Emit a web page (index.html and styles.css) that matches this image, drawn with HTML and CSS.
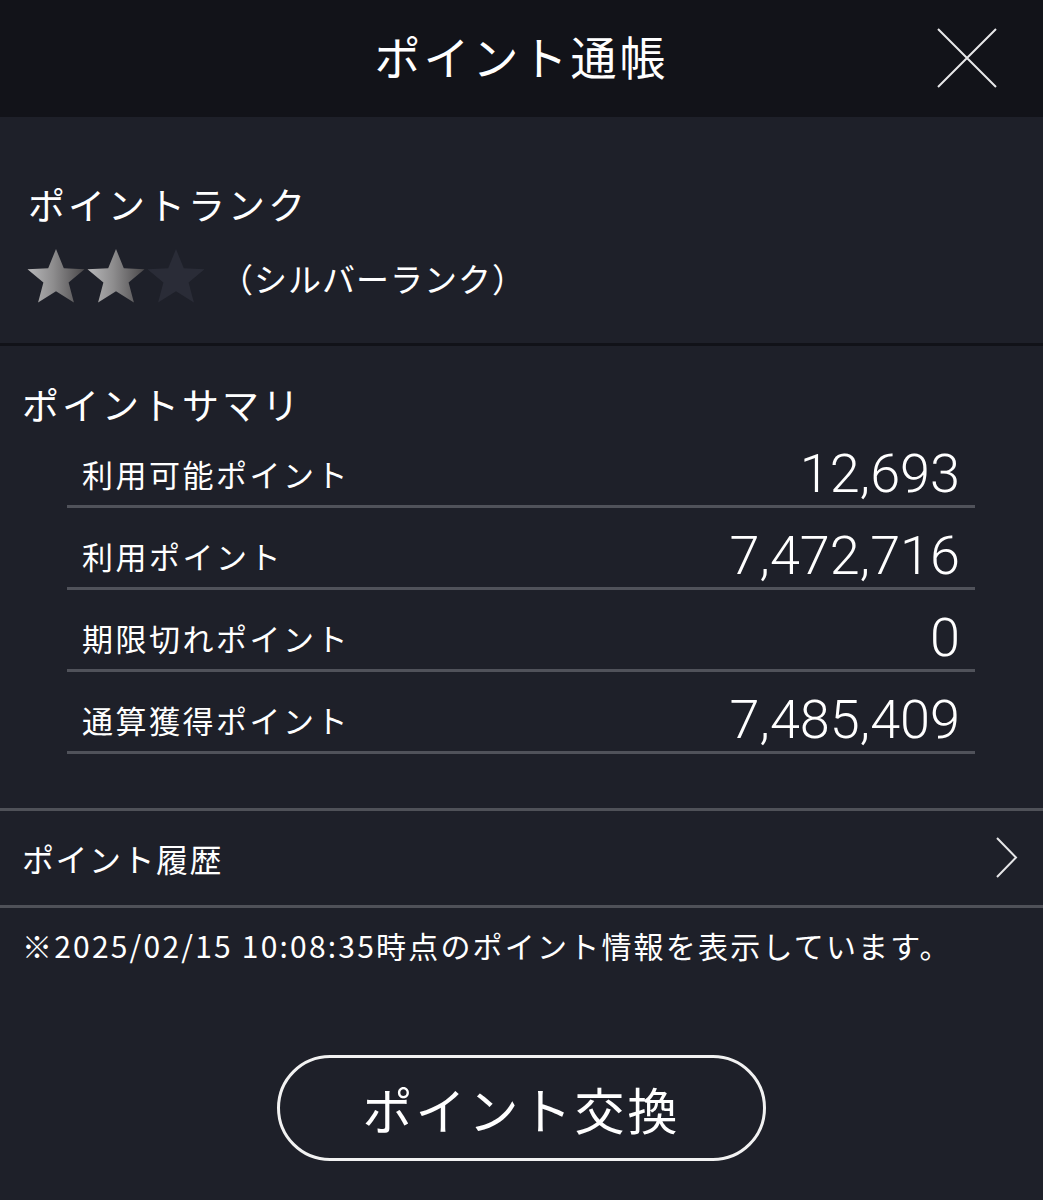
FILE: index.html
```html
<!DOCTYPE html>
<html lang="ja">
<head>
<meta charset="utf-8">
<title>ポイント通帳</title>
<link rel="stylesheet" href="styles.css">
</head>
<body>
<div class="screen">
  <header class="header">
    <h1 class="header-title">ポイント通帳</h1>
    <button class="close" aria-label="閉じる">
      <svg width="62" height="62" viewBox="0 0 62 62"><path d="M2 2 L60 60 M60 2 L2 60" stroke="#e8e8ea" stroke-width="2" fill="none"/></svg>
    </button>
  </header>

  <section class="rank">
    <h2 class="section-title rank-title">ポイントランク</h2>
    <div class="rank-row">
      <div class="stars">
        <svg class="star" viewBox="0 0 58 58"><defs><linearGradient id="sg" x1="0" y1="0" x2="1" y2="0"><stop offset="0" stop-color="#b8b8ba"/><stop offset="0.45" stop-color="#8e8d8e"/><stop offset="1" stop-color="#4a484a"/></linearGradient></defs><path d="M29 0 L36.8 19.2 L57.5 20.3 L41.6 33.4 L46.9 53.5 L29 42.2 L11.1 53.5 L16.4 33.4 L0.5 20.3 L21.2 19.2 Z" fill="url(#sg)"/></svg>
        <svg class="star" viewBox="0 0 58 58"><path d="M29 0 L36.8 19.2 L57.5 20.3 L41.6 33.4 L46.9 53.5 L29 42.2 L11.1 53.5 L16.4 33.4 L0.5 20.3 L21.2 19.2 Z" fill="url(#sg)"/></svg>
        <svg class="star" viewBox="0 0 58 58"><path d="M29 0 L36.8 19.2 L57.5 20.3 L41.6 33.4 L46.9 53.5 L29 42.2 L11.1 53.5 L16.4 33.4 L0.5 20.3 L21.2 19.2 Z" fill="#2a2c37"/></svg>
      </div>
      <span class="rank-name">（シルバーランク）</span>
    </div>
  </section>

  <section class="summary">
    <h2 class="section-title summary-title">ポイントサマリ</h2>
    <div class="rows">
      <div class="row"><span class="label">利用可能ポイント</span><span class="value">12,693</span></div>
      <div class="row"><span class="label">利用ポイント</span><span class="value">7,472,716</span></div>
      <div class="row"><span class="label">期限切れポイント</span><span class="value">0</span></div>
      <div class="row"><span class="label">通算獲得ポイント</span><span class="value">7,485,409</span></div>
    </div>
  </section>

  <a class="history" href="#">
    <span>ポイント履歴</span>
    <svg width="24" height="42" viewBox="0 0 24 42"><path d="M2 1 L21 20.5 L2 40" stroke="#e6e6e8" stroke-width="2" fill="none"/></svg>
  </a>

  <p class="note">※2025/02/15 10:08:35時点のポイント情報を表示しています。</p>

  <div class="actions">
    <button class="exchange">ポイント交換</button>
  </div>
</div>
</body>
</html>
```

FILE: styles.css
```css
html, body {
  margin: 0;
  padding: 0;
  background: #1e2029;
}
body {
  font-family: "Noto Sans CJK JP", "Noto Sans", sans-serif;
  color: #ffffff;
}
.screen {
  width: 1043px;
  height: 1200px;
  background: #1e2029;
  overflow: hidden;
}
.header {
  height: 117px;
  background: #121319;
  display: flex;
  align-items: center;
  justify-content: center;
  position: relative;
}
.header-title {
  margin: -8px 0 0 0;
  font-size: 46px;
  font-weight: 400;
  letter-spacing: 3px;
  line-height: 1;
}
.close {
  position: absolute;
  right: 45px;
  top: 27px;
  padding: 0;
  border: 0;
  background: none;
  width: 62px;
  height: 62px;
}
.close svg { display: block; }

.section-title {
  margin: 0;
  font-weight: 400;
  font-size: 37px;
  line-height: 44px;
  letter-spacing: 3px;
}
.rank {
  padding: 65px 0 35px 28px;
  border-bottom: 3px solid #111218;
}
.rank-row {
  display: flex;
  align-items: center;
  margin-top: 22px;
  height: 60px;
}
.stars {
  display: flex;
  gap: 0;
  margin-left: -2px;
}
.star {
  width: 60px;
  height: 58px;
  display: block;
}
.rank-name {
  margin-left: 14px;
  font-size: 33px;
  letter-spacing: 1px;
}

.summary {
  padding-top: 36px;
  padding-bottom: 54px;
  border-bottom: 3px solid #4f5158;
}
.summary-title {
  margin-left: 22px;
}
.rows {
  margin: 0 68px 0 67px;
}
.row {
  display: flex;
  justify-content: space-between;
  align-items: center;
  padding: 20px 15px 4px 15px;
  box-sizing: border-box;
  height: 82px;
  border-bottom: 3px solid #50525a;
}
.label {
  font-size: 31px;
  letter-spacing: 2.5px;
}
.value {
  font-family: Roboto, "Noto Sans", sans-serif;
  font-size: 54px;
  font-weight: 300;
  letter-spacing: 0;
  line-height: 1;
}

.history {
  display: flex;
  justify-content: space-between;
  align-items: center;
  height: 94px;
  padding: 0 24px 0 22px;
  border-bottom: 3px solid #4f5158;
  color: #fff;
  text-decoration: none;
  font-size: 32px;
  letter-spacing: 1.5px;
}
.history svg { display: block; }

.note {
  margin: 16px 0 0 22px;
  font-size: 30px;
  line-height: 42px;
  letter-spacing: 2.2px;
  white-space: nowrap;
}

.actions {
  display: flex;
  justify-content: center;
  padding-top: 89px;
}
.exchange {
  width: 489px;
  height: 106px;
  border: 3px solid #f2f2f2;
  border-radius: 53px;
  background: transparent;
  color: #fff;
  font-family: "Noto Sans CJK JP", "Noto Sans", sans-serif;
  font-size: 50px;
  letter-spacing: 3px;
  padding: 0;
}
```
